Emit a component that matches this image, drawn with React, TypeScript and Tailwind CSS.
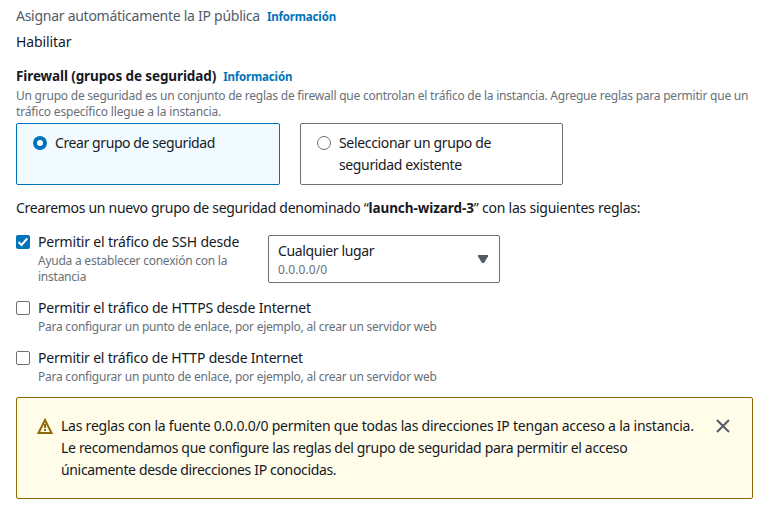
import type { ReactNode } from "react";

const body = "text-[14px] leading-[22px] whitespace-nowrap";
const hint = "text-[12px] leading-[16px] text-[#687078] whitespace-nowrap tracking-[-0.24px]";

function InfoLink() {
  return (
    <a className="ml-[7px] text-[11.5px] font-bold tracking-[-0.16px] text-[#0073bb]">Información</a>
  );
}

function Tile({ selected, children }: { selected?: boolean; children: ReactNode }) {
  return (
    <div
      className={
        selected
          ? "flex h-[62px] w-[264px] rounded-[2px] border border-[#0073bb] bg-[#f1faff] pt-[8px] pl-[16px]"
          : "flex h-[62px] w-[263px] rounded-[2px] border border-[#687078] bg-white pt-[8px] pl-[16px]"
      }
    >
      <span
        className={
          selected
            ? "mt-[4px] mr-[8px] size-[14px] shrink-0 rounded-full border-4 border-[#0073bb] bg-white"
            : "mt-[4px] mr-[8px] size-[14px] shrink-0 rounded-full border border-[#687078] bg-white"
        }
      />
      <div className={body}>{children}</div>
    </div>
  );
}

function Check({ checked }: { checked?: boolean }) {
  return checked ? (
    <svg className="mt-[4px] mr-[8px] size-[14px] shrink-0" viewBox="0 0 14 14">
      <rect width="14" height="14" rx="2" fill="#0073bb" />
      <path d="M2.5 7 5.5 10 11.3 3.5" fill="none" stroke="#fff" strokeWidth="2" />
    </svg>
  ) : (
    <span className="mt-[4px] mr-[8px] size-[14px] shrink-0 rounded-[2px] border border-[#687078]" />
  );
}

export default function App() {
  return (
    <main className="h-[516px] w-[763px] overflow-hidden bg-white pt-[5px] pl-[16px] font-['Noto_Sans','Open_Sans',sans-serif] text-[#16191f]">
      <div className={body + " text-[#545b64]"}>
        <span className="tracking-[-0.27px]">Asignar automáticamente la IP pública</span>
        <InfoLink />
      </div>
      <div className={body + " mt-[3px] tracking-[-0.1px]"}>Habilitar</div>
      <div className={body + " mt-[12px]"}>
        <span className="text-[13.5px] font-bold tracking-[-0.11px]">Firewall (grupos de seguridad)</span>
        <InfoLink />
      </div>
      <div className={hint}>
        <p className="tracking-[-0.23px]">Un grupo de seguridad es un conjunto de reglas de firewall que controlan el tráfico de la instancia. Agregue reglas para permitir que un</p>
        <p className="tracking-[-0.17px]">tráfico específico llegue a la instancia.</p>
      </div>
      <div className="mt-[3px] flex gap-[20px]">
        <Tile selected>
          <p className="tracking-[-0.41px]">Crear grupo de seguridad</p>
        </Tile>
        <Tile>
          <p className="tracking-[-0.33px]">Seleccionar un grupo de</p>
          <p className="tracking-[-0.37px]">seguridad existente</p>
        </Tile>
      </div>
      <p className={body + " mt-[12px] tracking-[-0.29px]"}>
        Crearemos un nuevo grupo de seguridad denominado “<b className="text-[13.5px] tracking-[-0.07px]">launch-wizard-3</b>
        <span className="tracking-[-0.23px]">” con las siguientes reglas:</span>
      </p>
      <div className="mt-[12px] flex h-[66px]">
        <Check checked />
        <div className="w-[230px]">
          <p className={body + " tracking-[-0.18px]"}>Permitir el tráfico de SSH desde</p>
          <div className={hint}>
            <p>Ayuda a establecer conexión con la</p>
            <p>instancia</p>
          </div>
        </div>
        <div className="mt-[4px] flex h-[48px] w-[232px] items-center justify-between rounded-[2px] border border-[#687078] pr-[11px] pl-[9px]">
          <div>
            <p className={body + " tracking-[-0.36px]"}>Cualquier lugar</p>
            <p className="text-[12px] leading-[16px] tracking-[0.1px] text-[#687078]">0.0.0.0/0</p>
          </div>
          <svg className="h-[8px] w-[10px]" viewBox="0 0 10 8">
            <path d="M0 0H10V1.5L6 8H4L0 1.5Z" fill="#545b64" />
          </svg>
        </div>
      </div>
      <div className="flex h-[50px]">
        <Check />
        <div>
          <p className={body + " tracking-[-0.19px]"}>Permitir el tráfico de HTTPS desde Internet</p>
          <p className={hint}>Para configurar un punto de enlace, por ejemplo, al crear un servidor web</p>
        </div>
      </div>
      <div className="flex h-[50px]">
        <Check />
        <div>
          <p className={body + " tracking-[-0.2px]"}>Permitir el tráfico de HTTP desde Internet</p>
          <p className={hint}>Para configurar un punto de enlace, por ejemplo, al crear un servidor web</p>
        </div>
      </div>
      <div className="flex h-[102px] w-[737px] rounded-[2px] border border-[#906806] bg-[#fffce9] pt-[17px] pl-[20px]">
        <svg className="mt-[3px] mr-[8px] size-[16px] shrink-0" viewBox="0 0 16 16">
          <path d="M8 2 14.5 15H1.5Z" fill="none" stroke="#906806" strokeWidth="2" />
          <path d="M8 6v4M8 11v2" fill="none" stroke="#906806" strokeWidth="2" />
        </svg>
        <div className={body + " w-[655px]"}>
          <p className="tracking-[-0.23px]">Las reglas con la fuente 0.0.0.0/0 permiten que todas las direcciones IP tengan acceso a la instancia.</p>
          <p className="tracking-[-0.32px]">Le recomendamos que configure las reglas del grupo de seguridad para permitir el acceso</p>
          <p className="tracking-[-0.34px]">únicamente desde direcciones IP conocidas.</p>
        </div>
        <svg className="mt-[4px] size-[14px] shrink-0" viewBox="0 0 14 14">
          <path d="M1 1 13 13M13 1 1 13" fill="none" stroke="#545b64" strokeWidth="2" />
        </svg>
      </div>
    </main>
  );
}
